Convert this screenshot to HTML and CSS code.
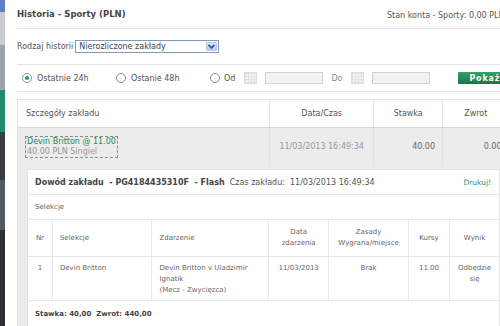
FILE: index.html
```html
<!DOCTYPE html>
<html lang="pl">
<head>
  <meta charset="UTF-8" />
  <title>Historia - Sporty</title>
  <link rel="stylesheet" href="styles.css">
</head>
<body>

  <div class="page">
    <!-- strip of the window behind -->
    <div class="side-strip"></div>

    <div class="main">

      <!-- title bar -->
      <div class="title-bar">
        <h1 class="title">Historia - Sporty (PLN)</h1>
        <span class="balance">Stan konta - Sporty: 0,00 PLN</span>
      </div>

      <!-- history type -->
      <div class="filter-row">
        <label class="filter-label">Rodzaj historii</label>
        <div class="select">
          <span class="select-text">Nierozliczone zakłady</span>
          <span class="select-btn">
            <svg width="7" height="5" viewBox="0 0 7 5"><path d="M0.5 0.8 L3.5 3.8 L6.5 0.8" fill="none" stroke="#34519a" stroke-width="1.6"/></svg>
          </span>
        </div>
      </div>

      <!-- period -->
      <div class="period-row">
        <span class="radio checked"></span>
        <span class="radio-label">Ostatnie 24h</span>
        <span class="radio"></span>
        <span class="radio-label">Ostanie 48h</span>
        <span class="radio"></span>
        <span class="radio-label short">Od</span>
        <span class="cal"></span>
        <span class="date-input"></span>
        <span class="radio-label to">Do</span>
        <span class="cal"></span>
        <span class="date-input"></span>
        <button class="show-btn">Pokaż</button>
      </div>

      <!-- bets table -->
      <table class="bets">
        <tr class="bets-head">
          <th class="col-details">Szczegóły zakładu</th>
          <th class="col-date">Data/Czas</th>
          <th class="col-stake">Stawka</th>
          <th class="col-return">Zwrot</th>
        </tr>
        <tr class="bet-row">
          <td class="col-details">
            <a class="bet-link">Devin Britton @ 11.00<br><span class="bet-sub">40.00 PLN Singiel</span></a>
          </td>
          <td class="col-date muted">11/03/2013 16:49:34</td>
          <td class="col-stake num">40.00</td>
          <td class="col-return num muted">0.00</td>
        </tr>
        <tr>
          <td class="bet-detail" colspan="4">
            <div class="slip">
              <div class="slip-head">
                <span><b>Dowód zakładu&nbsp; - PG4184435310F&nbsp; - Flash</b>&nbsp; Czas zakładu:&nbsp; 11/03/2013 16:49:34</span>
                <a class="print">Drukuj!</a>
              </div>
              <div class="slip-sub">Selekcje</div>
              <table class="selections">
                <tr>
                  <th class="c-nr">Nr</th>
                  <th class="c-sel left">Selekcje</th>
                  <th class="c-event left">Zdarzenie</th>
                  <th class="c-date">Data<br>zdarzenia</th>
                  <th class="c-rules">Zasady<br>Wygrana/miejsce</th>
                  <th class="c-odds">Kursy</th>
                  <th class="c-result">Wynik</th>
                </tr>
                <tr>
                  <td class="c-nr">1</td>
                  <td class="left">Devin Britton</td>
                  <td class="left">Devin Britton v Uladzimir Ignatik<br>(Mecz - Zwycięzca)</td>
                  <td>11/03/2013</td>
                  <td>Brak</td>
                  <td>11.00</td>
                  <td>Odbędzie<br>się</td>
                </tr>
              </table>
              <div class="slip-foot"><b>Stawka: 40,00&nbsp; Zwrot: 440,00</b></div>
            </div>
          </td>
        </tr>
      </table>

    </div>
  </div>

</body>
</html>
```

FILE: styles.css
```css
body {
  margin: 0;
  font-family: "DejaVu Sans", Verdana, sans-serif;
  font-size: 8px;
  color: #555;
  background-color: #fff;
  overflow: hidden;
}

.page {
  display: flex;
  height: 326px;
}

.side-strip {
  flex: 0 0 5px;
  background: linear-gradient(#5d7fc4 0, #5d7fc4 12px, #c9cdd0 12px, #c9cdd0 45px, #9fa4a8 45px, #9fa4a8 90px, #1f8d6c 90px, #1f8d6c 132px, #3a3d40 132px, #3a3d40 180px, #555a5e 180px, #555a5e 230px, #2d3033 230px);
}

.main {
  flex: 0 0 490px;
  margin-left: 12px;
}

/* title */
.title-bar {
  display: flex;
  justify-content: space-between;
  align-items: flex-end;
  height: 24px;
  padding-bottom: 4px;
  border-bottom: 1px solid #e3e3e3;
}

.title {
  margin: 0;
  font-size: 8.5px;
  font-weight: bold;
  color: #444;
  line-height: 12px;
  padding-bottom: 4px;
}

.balance {
  font-size: 8px;
  color: #555;
  line-height: 12px;
  padding-right: 5px;
  padding-bottom: 2px;
  white-space: nowrap;
}

/* history type */
.filter-row {
  display: flex;
  align-items: center;
  height: 35px;
  border-bottom: 1px solid #e3e3e3;
}

.filter-label {
  margin-right: 2px;
}

.select {
  display: flex;
  align-items: center;
  justify-content: space-between;
  width: 139px;
  height: 11px;
  border: 1px solid #7f9db9;
  padding-left: 3px;
  font-size: 8px;
  color: #444;
}

.select-btn {
  display: flex;
  align-items: center;
  justify-content: center;
  width: 11px;
  height: 9px;
  margin-right: 1px;
  border-radius: 1px;
  background: linear-gradient(#dfe8fb, #b6caf2);
  border: 1px solid #b8c9ee;
  box-sizing: border-box;
}

/* period */
.period-row {
  display: flex;
  align-items: center;
  height: 26px;
  border-bottom: 1px solid #e3e3e3;
}

.radio {
  width: 8px;
  height: 8px;
  border: 1px solid #8b8b8b;
  border-radius: 50%;
  margin-left: 5px;
  position: relative;
  background: #fff;
}

.radio.checked {
  border-color: #7aa98e;
}

.radio.checked::after {
  content: "";
  position: absolute;
  left: 2px;
  top: 2px;
  width: 4px;
  height: 4px;
  border-radius: 50%;
  background: #2b9a5c;
}

.radio-label {
  margin-left: 5px;
  width: 74px;
}

.radio-label.short {
  width: auto;
  margin-left: 4px;
}

.radio-label.to {
  width: auto;
  margin-left: 8px;
  color: #888;
}

.cal {
  width: 13px;
  height: 12px;
  margin-left: 9px;
  border: 1px solid #ddd;
  background-color: #f4f4f4;
  background-image: linear-gradient(90deg, #e2e2e2 1px, transparent 1px), linear-gradient(#e2e2e2 1px, transparent 1px);
  background-size: 3px 3px;
  box-sizing: border-box;
}

.date-input {
  width: 58px;
  height: 12px;
  margin-left: 8px;
  border: 1px solid #cfd3cf;
  background: #f2f3f1;
  box-sizing: border-box;
}

.show-btn {
  margin-left: 28px;
  height: 12px;
  width: 50px;
  padding: 0 0 0 11px;
  text-align: left;
  border: none;
  border-radius: 1px;
  background: linear-gradient(#34a06b, #1b7549);
  color: #fff;
  font-family: "DejaVu Sans", Verdana, sans-serif;
  font-size: 8px;
  font-weight: bold;
  letter-spacing: 0.8px;
}

/* bets table */
.bets {
  margin-top: 7px;
  width: 100%;
  border-collapse: collapse;
  border-left: 1px solid #e3e3e3;
  border-top: 1px solid #e3e3e3;
}

.bets-head th {
  height: 25px;
  font-weight: normal;
  color: #555;
  border-right: 1px solid #e3e3e3;
  border-bottom: 1px solid #d8d8d8;
  background: #fff;
}

.bets-head .col-details {
  text-align: left;
  padding-left: 8px;
}

.col-details { width: 255px; }
.col-date { width: 105px; text-align: center; }
.col-stake { width: 62px; }
.col-return { width: 60px; }

.bet-row td {
  height: 35px;
  background: #ececec;
  border-right: 1px solid #e3e3e3;
  vertical-align: middle;
}

.bet-row .col-details {
  padding-left: 7px;
}

.bet-link {
  display: inline-block;
  border: 1px dashed #8a8a8a;
  color: #1f8a55;
  line-height: 10px;
  padding: 0 1px;
}

.bet-sub {
  color: #999;
}

.muted {
  color: #999;
}

.num {
  text-align: right;
  padding-right: 7px;
  color: #666;
}

.bet-detail {
  background: #ececec;
  padding: 4px 9px 0 9px;
}

/* bet slip */
.slip {
  background: #fff;
  border: 1px solid #e2e2e2;
  width: 471px;
}

.slip-head {
  display: flex;
  justify-content: space-between;
  align-items: center;
  height: 24px;
  padding: 0 8px 0 7px;
  border-bottom: 1px solid #e6e6e6;
  color: #555;
}

.slip-head b {
  color: #444;
}

.print {
  color: #2e8a78;
  font-size: 7.5px;
}

.slip-sub {
  display: flex;
  align-items: center;
  height: 24px;
  padding-left: 7px;
  font-size: 7px;
  color: #666;
  border-bottom: 1px solid #e6e6e6;
}

.selections {
  width: 100%;
  border-collapse: collapse;
  font-size: 7px;
  color: #666;
}

.selections th,
.selections td {
  border-right: 1px solid #e6e6e6;
  border-bottom: 1px solid #e6e6e6;
  text-align: center;
  line-height: 11px;
  background: #fff;
}

.selections th:last-child,
.selections td:last-child {
  border-right: none;
}

.selections th {
  height: 34px;
  font-weight: normal;
}

.selections td {
  height: 44px;
  vertical-align: top;
  padding-top: 6px;
  box-sizing: border-box;
}

.selections .left {
  text-align: left;
  padding-left: 7px;
}

.c-nr { width: 24px; }
.c-sel { width: 100px; }
.c-event { width: 118px; }
.c-date { width: 60px; }
.c-rules { width: 79px; }
.c-odds { width: 41px; }
.c-result { width: 49px; }

.slip-foot {
  display: flex;
  align-items: center;
  height: 25px;
  padding-left: 7px;
  font-size: 7px;
  color: #444;
}
```
